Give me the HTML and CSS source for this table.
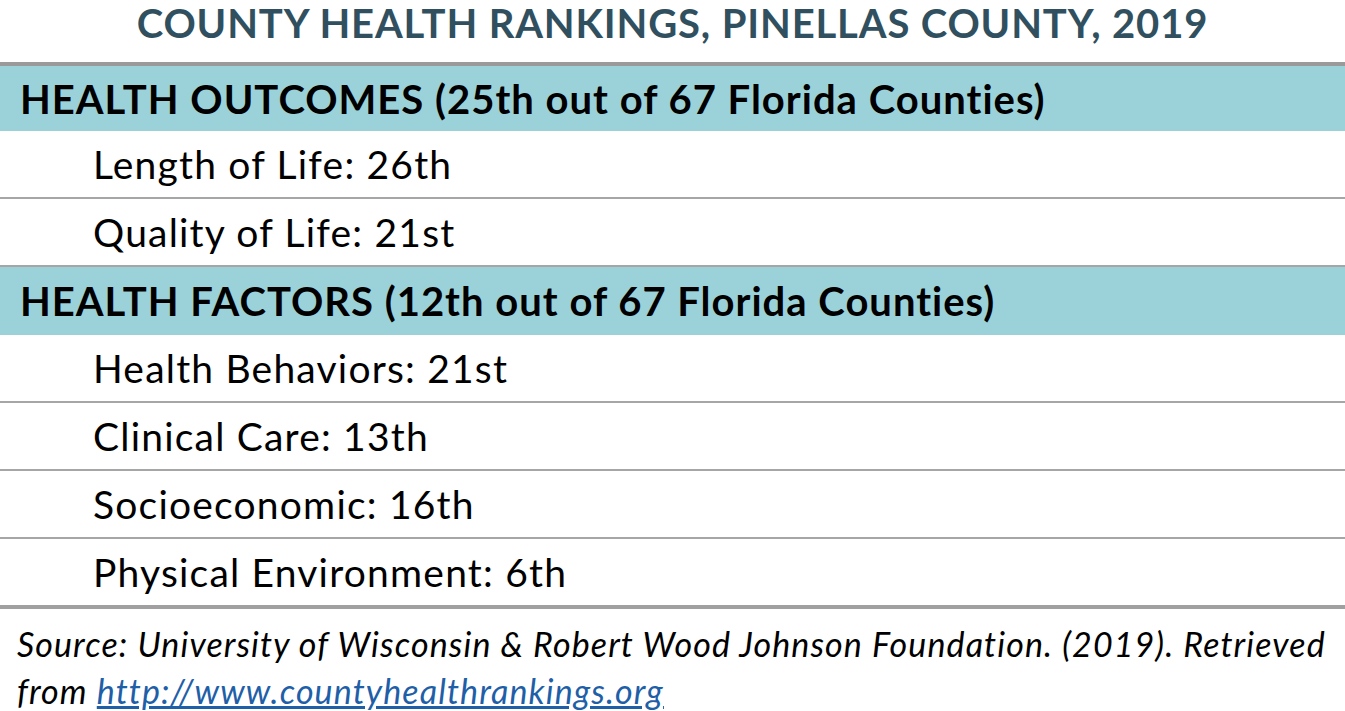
FILE: index.html
```html
<!DOCTYPE html>
<html lang="en">
<head>
<meta charset="utf-8">
<title>County Health Rankings, Pinellas County, 2019</title>
<link rel="stylesheet" href="styles.css">
</head>
<body>
<div class="page">
  <h1 class="title">COUNTY HEALTH RANKINGS, PINELLAS COUNTY, 2019</h1>
  <div class="table">
    <div class="row head first">HEALTH OUTCOMES (25th out of 67 Florida Counties)</div>
    <div class="row item">Length of Life: 26th</div>
    <div class="row item">Quality of Life: 21st</div>
    <div class="row head">HEALTH FACTORS (12th out of 67 Florida Counties)</div>
    <div class="row item">Health Behaviors: 21st</div>
    <div class="row item">Clinical Care: 13th</div>
    <div class="row item">Socioeconomic: 16th</div>
    <div class="row item last">Physical Environment: 6th</div>
  </div>
  <p class="source"><span class="line">Source: University of Wisconsin &amp; Robert Wood Johnson Foundation. (2019). Retrieved</span><br>from <a href="#">http://www.countyhealthrankings.org</a></p>
</div>
</body>
</html>
```

FILE: styles.css
```css
html, body {
  margin: 0;
  padding: 0;
  background: #ffffff;
}
.page {
  width: 1345px;
  font-family: Lato, "Open Sans", "Liberation Sans", sans-serif;
  color: #000;
}
.title {
  margin: 0;
  height: 62px;
  box-sizing: border-box;
  line-height: 46px;
  text-align: center;
  font-size: 40px;
  font-weight: 700;
  color: #31505f;
  letter-spacing: 0.85px;
}
.table {
  border-top: 4px solid #9a9a9a;
  display: flex;
  flex-direction: column;
}
.row {
  display: flex;
  align-items: center;
  box-sizing: border-box;
}
.head {
  height: 68px;
  background: #9bd2da;
  padding-left: 20px;
  font-weight: 700;
  font-size: 40px;
  letter-spacing: 1px;
}
.head.first {
  height: 65px;
}
.item {
  height: 68px;
  padding-left: 93px;
  font-size: 39px;
  letter-spacing: 1.2px;
  border-bottom: 2px solid #a6a6a6;
}
.item.last {
  height: 70px;
  border-bottom: 4px solid #a0a0a0;
}
.source {
  margin: 0;
  padding: 11px 0 0 17px;
  font-style: italic;
  font-size: 34px;
  letter-spacing: 1.1px;
  line-height: 47px;
}
.source .line {
  white-space: nowrap;
}
.source a {
  color: #1f5fa8;
  text-decoration: underline;
}
```
